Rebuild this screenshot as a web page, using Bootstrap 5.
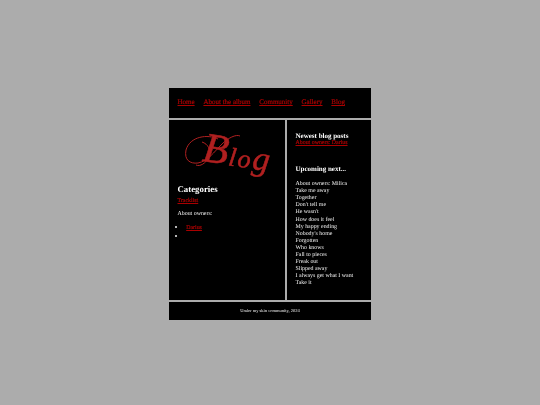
<!DOCTYPE html>
<html lang="en"><head><meta charset="utf-8"><title>Blog</title>
<link href="https://cdn.jsdelivr.net/npm/bootstrap@5.3.0/dist/css/bootstrap.min.css" rel="stylesheet">
<style>
html,body{height:405px;overflow:hidden}
body{background:#acacac;font-family:"Liberation Serif",serif;font-size:5.9px;line-height:7.1px;color:#f2f2f2;text-rendering:geometricPrecision}
.sheet{width:202px;margin:88px 0 0 169px;gap:2px;will-change:transform}
.panel{background:#000}
a{color:#aa0000;text-decoration-thickness:.6px;text-underline-offset:1px;-webkit-text-stroke:.2px #aa0000}
.topbar{height:30px;padding:0 8.5px;gap:8.8px;font-size:7px;white-space:nowrap}
.mid{height:180px;gap:2px}
.leftcol{width:116px;padding:0 8.5px}
.rightcol{width:84px;padding:12px 8.5px 0}
.logo{display:block;width:100px;height:50px;margin:10px 0 0 0;overflow:visible}
.logo text{font-family:"Liberation Serif",serif;font-style:italic;fill:#b02020;stroke:#b02020;stroke-width:.5px}
.cat{font-size:8.8px;font-weight:700;line-height:10px;color:#fff;margin:4px 0 4px}
.lefttext p{margin:0 0 6px}
.lefttext p+p{margin-bottom:5px}
.lefttext ul{margin:0;padding-left:8.7px;line-height:8px}
.lefttext li::marker{font-size:8px}
.side-h{font-size:7px;font-weight:700;line-height:8px;color:#fff;margin:0}
.nextgap{margin:18px 0 8px}
.foot{height:18px;font-size:4.5px;line-height:18px}
</style></head><body>
<div class="sheet d-flex flex-column">
 <nav class="panel topbar d-flex align-items-center">
  <a href="#">Home</a><a href="#">About the album</a><a href="#">Community</a><a href="#">Gallery</a><a href="#">Blog</a>
 </nav>
 <div class="mid d-flex">
  <div class="panel leftcol">
   <svg class="logo" viewBox="0 0 100 50" role="img" aria-label="Blog">
    <path d="M40 9C30 4 12 6 8 20C6 30 12 34 20 33C30 31 36 22 44 14C50 8 58 4 62 6M24 12C30 14 34 20 30 28C28 33 22 37 18 35" fill="none" stroke="#b02020" stroke-width="1"/>
    <text x="23" y="33" font-size="42" transform="rotate(8 40 36)">B<tspan font-size="26" dx="1" dy="1" letter-spacing="1.8">lo</tspan><tspan font-size="34" dx="0">g</tspan></text>
   </svg>
   <div class="cat">Categories</div>
   <div class="lefttext">
    <p><a href="#">Tracklist</a></p>
    <p>About owners:</p>
    <ul><li><a href="#">Darius</a></li><li></li></ul>
   </div>
  </div>
  <div class="panel rightcol">
   <h2 class="side-h">Newest blog posts</h2>
   <a href="#">About owners: Darius</a>
   <h2 class="side-h nextgap">Upcoming next...</h2>
   <div>About owners: Milica<br>Take me away<br>Together<br>Don't tell me<br>He wasn't<br>How does it feel<br>My happy ending<br>Nobody's home<br>Forgotten<br>Who knows<br>Fall to pieces<br>Freak out<br>Slipped away<br>I always get what I want<br>Take it</div>
  </div>
 </div>
 <footer class="panel foot text-center">Under my skin community, 2024</footer>
</div>
<script src="https://cdn.jsdelivr.net/npm/bootstrap@5.3.0/dist/js/bootstrap.bundle.min.js"></script>
</body></html>
